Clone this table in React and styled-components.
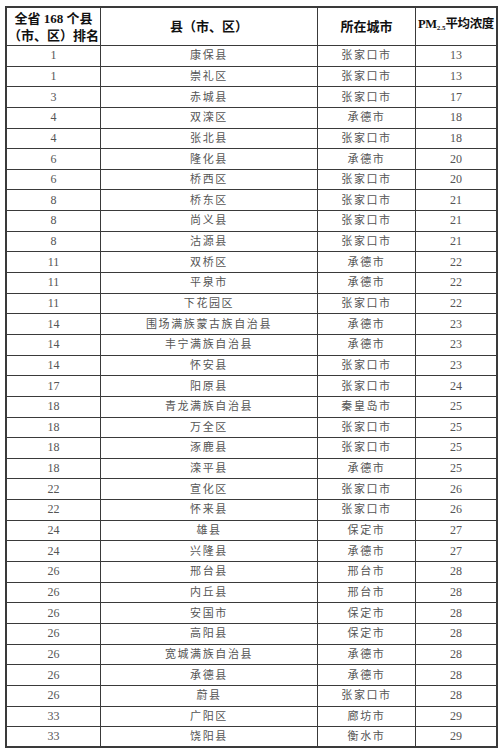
import React from 'react';
import styled, { createGlobalStyle } from 'styled-components';

const GlobalStyle = createGlobalStyle`
  html, body {
    margin: 0;
    padding: 0;
    background: #fff;
  }
`;

const Page = styled.div`
  padding: 6px 0 0 5px;
  font-family: 'Liberation Serif', 'Noto Sans CJK SC', serif;
`;

const Table = styled.table`
  width: 486px;
  border-collapse: collapse;
  table-layout: fixed;
  border: 2px solid #3a3a3a;
`;

const HeadCell = styled.th`
  height: 37px;
  padding: 0;
  border: 1.5px solid #3a3a3a;
  font-size: ${p => (p.$tight ? '12.5px' : '13px')};
  letter-spacing: ${p => (p.$tight ? '-0.4px' : '0')};
  line-height: 17px;
  font-weight: 700;
  color: #111;
  text-align: center;
  vertical-align: middle;
  white-space: nowrap;
  overflow: hidden;
  width: ${p => p.$w}px;
`;

const Row = styled.tr`
  height: 20.65px;
`;

const Cell = styled.td`
  padding: 0;
  border: 1.5px solid #3a3a3a;
  text-align: center;
  vertical-align: middle;
  color: #555;
  font-size: ${p => (p.$num ? '12px' : '11px')};
  letter-spacing: ${p => (p.$num ? '0' : '1.6px')};
  line-height: 17px;
  white-space: nowrap;
`;

const Sub = styled.sub`
  font-size: 7px;
  letter-spacing: 0;
  vertical-align: -2px;
`;

const rows = [
  [1, '康保县', '张家口市', 13],
  [1, '崇礼区', '张家口市', 13],
  [3, '赤城县', '张家口市', 17],
  [4, '双滦区', '承德市', 18],
  [4, '张北县', '张家口市', 18],
  [6, '隆化县', '承德市', 20],
  [6, '桥西区', '张家口市', 20],
  [8, '桥东区', '张家口市', 21],
  [8, '尚义县', '张家口市', 21],
  [8, '沽源县', '张家口市', 21],
  [11, '双桥区', '承德市', 22],
  [11, '平泉市', '承德市', 22],
  [11, '下花园区', '张家口市', 22],
  [14, '围场满族蒙古族自治县', '承德市', 23],
  [14, '丰宁满族自治县', '承德市', 23],
  [14, '怀安县', '张家口市', 23],
  [17, '阳原县', '张家口市', 24],
  [18, '青龙满族自治县', '秦皇岛市', 25],
  [18, '万全区', '张家口市', 25],
  [18, '涿鹿县', '张家口市', 25],
  [18, '滦平县', '承德市', 25],
  [22, '宣化区', '张家口市', 26],
  [22, '怀来县', '张家口市', 26],
  [24, '雄县', '保定市', 27],
  [24, '兴隆县', '承德市', 27],
  [26, '邢台县', '邢台市', 28],
  [26, '内丘县', '邢台市', 28],
  [26, '安国市', '保定市', 28],
  [26, '高阳县', '保定市', 28],
  [26, '宽城满族自治县', '承德市', 28],
  [26, '承德县', '承德市', 28],
  [26, '蔚县', '张家口市', 28],
  [33, '广阳区', '廊坊市', 29],
  [33, '饶阳县', '衡水市', 29],
];

export default function App() {
  return (
    <>
      <GlobalStyle />
      <Page>
        <Table>
          <thead>
            <tr>
              <HeadCell $w={93}>
                全省 168 个县
                <br />
                （市、区）排名
              </HeadCell>
              <HeadCell $w={216}>县（市、区）</HeadCell>
              <HeadCell $w={97}>所在城市</HeadCell>
              <HeadCell $w={80} $tight>
                PM<Sub>2.5</Sub>平均浓度
              </HeadCell>
            </tr>
          </thead>
          <tbody>
            {rows.map(([rank, county, city, pm], i) => (
              <Row key={i}>
                <Cell $num>{rank}</Cell>
                <Cell>{county}</Cell>
                <Cell>{city}</Cell>
                <Cell $num>{pm}</Cell>
              </Row>
            ))}
          </tbody>
        </Table>
      </Page>
    </>
  );
}
